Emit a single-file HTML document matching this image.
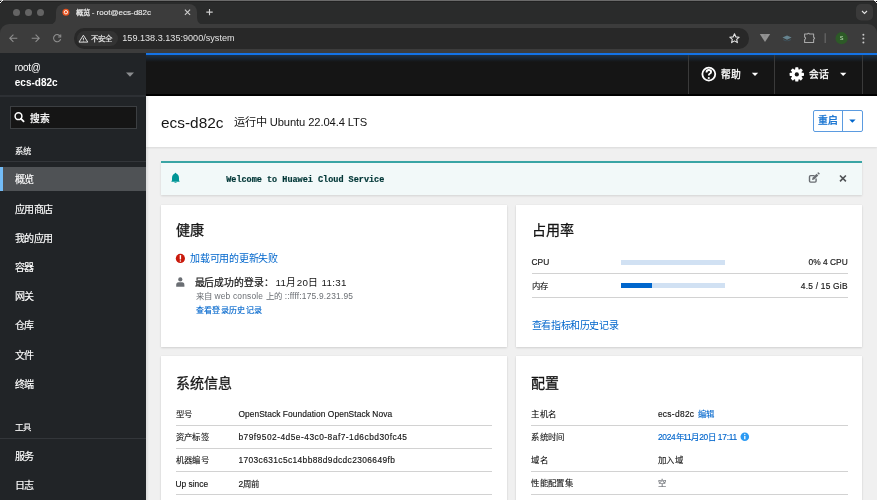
<!DOCTYPE html>
<html lang="zh-CN"><head><meta charset="utf-8">
<style>
*{box-sizing:border-box;margin:0;padding:0}
html,body{width:877px;height:500px;overflow:hidden;background:#f0f0f0;font-family:"Liberation Sans",sans-serif}
.a{position:absolute}
.t{position:absolute;white-space:nowrap;line-height:1}
svg{position:absolute;overflow:visible}
/* browser chrome */
#tabstrip{left:0;top:0;width:877px;height:40px;background:#2a2b2b;border-top:1px solid #6a6a6a}
#toolbar{left:0;top:24px;width:877px;height:29px;background:#3c3c3c;border-radius:9px 9px 0 0}
.dot{width:7.4px;height:7.4px;border-radius:50%;background:#646464;top:8.6px}
#tab{left:56px;top:3.5px;width:141px;height:22px;background:#3c3c3c;border-radius:8px 8px 0 0}
#omni{left:74px;top:28.4px;width:675px;height:20.4px;background:#282828;border-radius:10.2px}
#chip{left:76.5px;top:31px;width:41px;height:15px;background:#333333;border-radius:7.5px}
/* cockpit */
#sidebar{left:0;top:53px;width:146px;height:447px;background:#212427}
#header{left:146px;top:53px;width:731px;height:42px;background:#151515}
#blue{left:146px;top:53px;width:731px;height:2px;background:#1473e6}
#bluegrad{left:146px;top:55px;width:731px;height:7px;background:linear-gradient(#1d3146,rgba(21,21,21,0))}
.hsep{top:55px;width:1px;height:40px;background:#3a3a3a}
#pagehdr{left:146px;top:95px;width:731px;height:51.5px;background:#fff;box-shadow:0 1px 2px rgba(0,0,0,.10)}
.card{background:#fff;box-shadow:0 1px 2px rgba(3,3,3,.12),0 0 1px rgba(3,3,3,.10)}
.nav{left:14.5px;font-size:10px;letter-spacing:-0.4px;color:#fff;-webkit-text-stroke:0.15px #fff}
.navh{left:14.5px;font-size:8.4px;letter-spacing:0.4px;color:#fff;-webkit-text-stroke:0.12px #fff}
.lbl{font-size:8.4px;color:#151515;-webkit-text-stroke:0.15px currentColor}
.cj{-webkit-text-stroke:0.1px currentColor}
.sep{height:1px;background:#d2d2d2}
.link{color:#0066cc}
.cj{letter-spacing:0.4px}
.ct{font-size:14px;letter-spacing:0.1px;color:#151515;-webkit-text-stroke:0.28px #151515}
</style></head><body><div id="root" style="position:absolute;left:0;top:0;width:877px;height:500px;will-change:transform">
<!-- tab strip -->
<div class="a" id="tabstrip"></div>
<div class="a dot" style="left:12.7px"></div>
<div class="a dot" style="left:24.7px"></div>
<div class="a dot" style="left:37.1px"></div>
<div class="a" style="left:0;top:1px;width:877px;height:1px;background:#222"></div>
<div class="a" id="tab"></div>
<svg style="left:0;top:0" width="877" height="25">
  <path d="M52 25 Q56 25 56 21 L56 21" fill="#3c3c3c"/>
  <path d="M48 25 Q56 25 56 17 L56 25 Z" fill="#3c3c3c"/>
  <path d="M205 25 Q197 25 197 17 L197 25 Z" fill="#3c3c3c"/>
  <circle cx="65.9" cy="12.2" r="3.5" fill="#e95420"/>
  <circle cx="65.9" cy="12.2" r="1.7" fill="none" stroke="#fff" stroke-width="0.9"/>
  <path d="M184.9 9.6 L190.1 14.8 M190.1 9.6 L184.9 14.8" stroke="#d0d0d0" stroke-width="1.1"/>
  <path d="M209.5 8.9 V15.3 M206.3 12.1 H212.7" stroke="#d0d0d0" stroke-width="1.1"/>
  <rect x="856" y="4" width="17" height="16.5" rx="5" fill="#3a3a3a"/>
  <path d="M862 11 L864.5 13.5 L867 11" fill="none" stroke="#e3e3e3" stroke-width="1.1"/>
</svg>
<div class="t" style="left:75.5px;top:9.4px;font-size:8px;color:#ebebeb;-webkit-text-stroke:0.12px #ebebeb"><span style="font-size:7.4px;-webkit-text-stroke:0.25px #ebebeb">概览</span> - root@ecs-d82c</div>
<div class="a" style="left:0;top:0;width:3px;height:1px;background:#fff"></div>
<div class="a" style="left:0;top:0;width:2px;height:1px;background:#aaa"></div>
<div class="a" style="left:0;top:1px;width:1px;height:1px;background:#000"></div>
<div class="a" style="left:1px;top:1px;width:1px;height:1px;background:#ccc"></div>
<div class="a" style="left:0;top:2px;width:1px;height:1px;background:#fff"></div>
<div class="a" style="left:874px;top:0;width:3px;height:1px;background:#fff"></div>
<div class="a" style="left:876px;top:1px;width:1px;height:1px;background:#000"></div>
<div class="a" style="left:875px;top:1px;width:1px;height:1px;background:#ccc"></div>
<div class="a" style="left:876px;top:2px;width:1px;height:1px;background:#fff"></div>
<!-- toolbar -->
<div class="a" id="toolbar"></div>
<div class="a" id="omni"></div>
<div class="a" id="chip"></div>
<svg style="left:0;top:24px" width="877" height="29">
  <g fill="none" stroke="#8d8d8d" stroke-width="1.1">
    <path d="M10 14.2 H17.3 M13.4 10.6 L9.8 14.2 L13.4 17.8"/>
    <path d="M31.7 14.2 H39 M35.6 10.6 L39.2 14.2 L35.6 17.8"/>
    <path d="M60.3 12.4 A3.6 3.6 0 1 0 60.6 15.2"/>
    <path d="M60.7 10.4 V13 H58.1" />
  </g>
  <g fill="none" stroke="#e0e0e0" stroke-width="1">
    <path d="M83.4 11.2 L87.8 18.1 H79 Z"/>
    <path d="M83.4 13.8 V15.9"/>
  </g>
  <circle cx="83.4" cy="16.9" r="0.5" fill="#e0e0e0"/>
  <path d="M734.5 9.8 L735.9 12.9 L739.2 13.2 L736.7 15.4 L737.4 18.6 L734.5 16.9 L731.6 18.6 L732.3 15.4 L729.8 13.2 L733.1 12.9 Z" fill="none" stroke="#e3e3e3" stroke-width="1.1" stroke-linejoin="round"/>
  <path d="M759.8 10 H770.2 L765 17.9 Z" fill="#939393"/>
  <path d="M763.2 10.3 L765 13.6 L766.8 10.3 Z" fill="#8a8a8a"/>
  <path d="M783 16 Q787 18.4 791 16 V15 L787 16.8 L783 15 Z" fill="#3e525c"/><path d="M782.5 13.6 L787 11.6 L791.6 13.6 L787 15.8 Z" fill="#65838f"/>
  
  <path d="M804.6 10 H807.4 Q808.5 8.4 809.6 10 H813.6 V13.2 Q815.6 14.2 813.6 15.2 V18.5 H804.6 V15.6 Q806.6 14.3 804.6 13 Z" fill="none" stroke="#a8a8a8" stroke-width="1.1" stroke-linejoin="round"/>
  <path d="M825.2 9.3 V18.9" stroke="#686868" stroke-width="1.2"/>
  <circle cx="841.6" cy="14.2" r="6.1" fill="#2d5a27"/>
  <text x="841.6" y="16.2" font-size="5.5" fill="#c5e3bd" text-anchor="middle" font-family="Liberation Sans">S</text>
  <circle cx="863.4" cy="10.7" r="1" fill="#c7c7c7"/>
  <circle cx="863.4" cy="14.6" r="1" fill="#c7c7c7"/>
  <circle cx="863.4" cy="18.5" r="1" fill="#c7c7c7"/>
</svg>
<div class="t" style="left:90.8px;top:34.8px;font-size:7.4px;color:#e8e8e8;-webkit-text-stroke:0.2px #e8e8e8">不安全</div>
<div class="t" style="left:122.3px;top:34.2px;font-size:9.1px;color:#e3e3e3">159.138.3.135:9000/system</div>

<!-- cockpit -->
<div class="a" id="sidebar"></div>
<div class="a" style="left:0;top:95px;width:146px;height:1.6px;background:#2d3034"></div>
<div class="t" style="left:14.8px;top:62.5px;font-size:10px;color:#fff;letter-spacing:-0.3px">root@</div>
<div class="t" style="left:14.8px;top:77.8px;font-size:10px;font-weight:bold;color:#fff">ecs-d82c</div>
<svg style="left:0;top:53px" width="146" height="80">
  <path d="M126 19.4 H134 L130 23.8 Z" fill="#8b8d8f"/>
</svg>
<div class="a" style="left:10px;top:106px;width:127px;height:22.5px;background:#151515;border:1px solid #3c3f42"></div>
<svg style="left:0;top:100px" width="40" height="30">
  <circle cx="18.5" cy="16.2" r="3.4" fill="none" stroke="#fff" stroke-width="1.5"/>
  <path d="M20.9 18.6 L23.6 21.3" stroke="#fff" stroke-width="1.8" stroke-linecap="round"/>
</svg>
<div class="t" style="left:29.7px;top:113.5px;font-size:9.8px;color:#fff;-webkit-text-stroke:0.25px #fff">搜索</div>
<div class="t navh" style="top:147px">系统</div>
<div class="a" style="left:0;top:161px;width:146px;height:1px;background:#33363a"></div>
<div class="a" style="left:0;top:167px;width:146px;height:24px;background:#4f5255"></div>
<div class="a" style="left:0;top:167px;width:2.5px;height:24px;background:#73bcf7"></div>
<div class="t nav" style="top:175px">概览</div>
<div class="t nav" style="top:204.5px">应用商店</div>
<div class="t nav" style="top:233.5px">我的应用</div>
<div class="t nav" style="top:262.5px">容器</div>
<div class="t nav" style="top:292.0px">网关</div>
<div class="t nav" style="top:321.3px">仓库</div>
<div class="t nav" style="top:350.7px">文件</div>
<div class="t nav" style="top:379.9px">终端</div>
<div class="t navh" style="top:423px">工具</div>
<div class="a" style="left:0;top:437.5px;width:146px;height:1px;background:#33363a"></div>
<div class="t nav" style="top:452.0px">服务</div>
<div class="t nav" style="top:481.2px">日志</div>

<div class="a" id="header"></div>
<div class="a" id="blue"></div>
<div class="a" id="bluegrad"></div>
<div class="a hsep" style="left:687.5px"></div>
<div class="a hsep" style="left:774px"></div>
<div class="a hsep" style="left:861.5px"></div>
<svg style="left:680px;top:53px" width="197" height="42">
  <circle cx="28.8" cy="21.1" r="6.45" fill="none" stroke="#fff" stroke-width="1.8"/>
  <path d="M26.5 19.4 Q26.5 17 28.8 17 Q31.1 17 31.1 18.9 Q31.1 20.1 29.7 20.8 Q28.8 21.3 28.8 22.6" fill="none" stroke="#fff" stroke-width="1.8"/>
  <circle cx="28.8" cy="25" r="1.1" fill="#fff"/>
  <path d="M71.8 19.8 H78.2 L75 23 Z" fill="#fff"/>
  <g transform="translate(116.8 21.4)" fill="#fff"><rect x="-1.6" y="-7.2" width="3.2" height="3.4" rx="0.7" transform="rotate(0)"/><rect x="-1.6" y="-7.2" width="3.2" height="3.4" rx="0.7" transform="rotate(45)"/><rect x="-1.6" y="-7.2" width="3.2" height="3.4" rx="0.7" transform="rotate(90)"/><rect x="-1.6" y="-7.2" width="3.2" height="3.4" rx="0.7" transform="rotate(135)"/><rect x="-1.6" y="-7.2" width="3.2" height="3.4" rx="0.7" transform="rotate(180)"/><rect x="-1.6" y="-7.2" width="3.2" height="3.4" rx="0.7" transform="rotate(225)"/><rect x="-1.6" y="-7.2" width="3.2" height="3.4" rx="0.7" transform="rotate(270)"/><rect x="-1.6" y="-7.2" width="3.2" height="3.4" rx="0.7" transform="rotate(315)"/><circle r="5.3"/><circle r="2.1" fill="#151515"/></g>
  <path d="M160 19.8 H166.4 L163.2 23 Z" fill="#fff"/>
</svg>
<div class="t" style="left:721.3px;top:70.2px;font-size:9.8px;color:#fff;-webkit-text-stroke:0.3px #fff">帮助</div>
<div class="t" style="left:809px;top:70.2px;font-size:9.8px;color:#fff;-webkit-text-stroke:0.3px #fff">会话</div>

<div class="a" id="pagehdr"></div>
<div class="a" style="left:146px;top:94px;width:731px;height:1.6px;background:#000"></div>
<div class="t" style="left:161px;top:114.6px;font-size:15.4px;color:#151515">ecs-d82c</div>
<div class="t" style="left:233.6px;top:117.3px;font-size:11.2px;color:#151515">运行中 <span style="letter-spacing:-0.1px">Ubuntu 22.04.4 LTS</span></div>
<div class="a" style="left:813px;top:110px;width:49.5px;height:22px;border:1px solid #5b9be0;border-radius:2px"></div>
<div class="a" style="left:842.3px;top:110px;width:1px;height:22px;background:#5b9be0"></div>
<div class="t" style="left:818px;top:116.2px;font-size:9.8px;color:#0066cc;-webkit-text-stroke:0.25px #0066cc">重启</div>
<svg style="left:840px;top:110px" width="22" height="22">
  <path d="M9.2 9.6 H15.6 L12.4 12.8 Z" fill="#0066cc"/>
</svg>

<div class="a" style="left:146px;top:95.6px;width:2.5px;height:405px;background:linear-gradient(90deg,rgba(0,0,0,.09),rgba(0,0,0,0))"></div>
<!-- alert -->
<div class="a" style="left:161px;top:161px;width:701px;height:34px;background:#f2f9f9;border-top:2px solid #3aa5a5;box-shadow:0 1px 2px rgba(3,3,3,.12)"></div>
<svg style="left:161px;top:161px" width="701" height="34">
  <path d="M14.5 11.8 Q15.2 11.8 15.2 12.6 Q18 13.6 18 17.2 V19.2 L18.7 20.8 H10.3 L11 19.2 V17.2 Q11 13.6 13.8 12.6 Q13.8 11.8 14.5 11.8 Z" fill="#009596"/>
  <path d="M13.2 21.2 H15.8 Q15.8 22 14.5 22 Q13.2 22 13.2 21.2 Z" fill="#009596"/>
  <path d="M653.6 14.6 H649.6 Q648.5 14.6 648.5 15.7 V20 Q648.5 21.1 649.6 21.1 H654 Q655.1 21.1 655.1 20 V17.6" fill="none" stroke="#6a6e73" stroke-width="1.4"/>
  <path d="M651 19 L651.5 16.8 L655.6 12.7 L657.3 14.4 L653.2 18.5 Z" fill="#6a6e73"/>
  <path d="M656.2 12.1 L656.9 11.4 Q657.3 11 657.7 11.4 L658.6 12.3 Q659 12.7 658.6 13.1 L657.9 13.8 Z" fill="#6a6e73"/>
  <path d="M679 14.5 L684.9 20.4 M684.9 14.5 L679 20.4" stroke="#4f5255" stroke-width="1.6"/>
</svg>
<div class="t" style="left:226.2px;top:175.5px;font-family:'Liberation Mono',monospace;font-weight:bold;font-size:8.5px;color:#003737;-webkit-text-stroke:0.2px #003737">Welcome to Huawei Cloud Service</div>

<!-- cards -->
<div class="a card" style="left:161px;top:204.5px;width:346px;height:142px"></div>
<div class="a card" style="left:515.5px;top:204.5px;width:346.5px;height:142px"></div>
<div class="a card" style="left:161px;top:355.5px;width:346px;height:150px"></div>
<div class="a card" style="left:515.5px;top:355.5px;width:346.5px;height:150px"></div>

<div class="t ct" style="left:176.3px;top:223.2px">健康</div>
<svg style="left:161px;top:240px" width="40" height="60">
  <circle cx="19.4" cy="18.4" r="4.6" fill="#c9190b"/>
  <path d="M19.4 15.6 V18.9" stroke="#fff" stroke-width="1.4" stroke-linecap="round"/>
  <circle cx="19.4" cy="20.9" r="0.75" fill="#fff"/>
  <circle cx="19.3" cy="39.4" r="2.1" fill="#6a6e73"/>
  <path d="M15.2 46.7 V45 Q15.2 42.3 17.6 42.3 H21 Q23.4 42.3 23.4 45 V46.7 Z" fill="#6a6e73"/>
</svg>
<div class="t link" style="left:190.2px;top:254px;font-size:10px;letter-spacing:-0.27px">加载可用的更新失败</div>
<div class="t" style="left:194.6px;top:277.5px;font-size:9.8px;color:#151515;letter-spacing:0.3px"><span style="letter-spacing:-0.1px;-webkit-text-stroke:0.2px #151515;margin-right:1.8px">最后成功的登录：</span>11月20日 11:31</div>
<div class="t" style="left:195.5px;top:292px;font-size:8.4px;color:#6a6e73;letter-spacing:0.2px">来自 web console 上的 ::ffff:175.9.231.95</div>
<div class="t link" style="left:195.5px;top:307px;font-size:8px;letter-spacing:0.4px;-webkit-text-stroke:0.15px #0066cc">查看登录历史记录</div>

<div class="t ct" style="left:531.9px;top:223.2px">占用率</div>
<div class="t lbl" style="left:531.5px;top:258px">CPU</div>
<div class="a" style="left:621px;top:260px;width:104px;height:4.5px;background:#d1e1f3"></div>
<div class="t lbl" style="right:29.3px;top:258px">0% 4 CPU</div>
<div class="a sep" style="left:531.9px;top:273px;width:316px"></div>
<div class="t lbl cj" style="left:531.5px;top:281.8px">内存</div>
<div class="a" style="left:621px;top:283px;width:104px;height:4.5px;background:#d1e1f3"></div>
<div class="a" style="left:621px;top:283px;width:30.5px;height:4.5px;background:#0066cc"></div>
<div class="t lbl" style="right:29.3px;top:282px;letter-spacing:0.22px">4.5 / 15 GiB</div>
<div class="a sep" style="left:531.9px;top:296.5px;width:316px"></div>
<div class="t link" style="left:531.9px;top:320.6px;font-size:10px;letter-spacing:-0.4px">查看指标和历史记录</div>

<div class="t ct" style="left:175.5px;top:375.8px">系统信息</div>
<div class="t lbl cj" style="left:175.5px;top:409.8px">型号</div>
<div class="t lbl" style="left:238.4px;top:409.8px;letter-spacing:0.07px">OpenStack Foundation OpenStack Nova</div>
<div class="a sep" style="left:175.5px;top:425px;width:316px"></div>
<div class="t lbl cj" style="left:175.5px;top:433.1px">资产标签</div>
<div class="t lbl" style="left:238.4px;top:433.1px;letter-spacing:0.48px">b79f9502-4d5e-43c0-8af7-1d6cbd30fc45</div>
<div class="a sep" style="left:175.5px;top:448px;width:316px"></div>
<div class="t lbl cj" style="left:175.5px;top:456.1px">机器编号</div>
<div class="t lbl" style="left:238.4px;top:456.1px;letter-spacing:0.39px">1703c631c5c14bb88d9dcdc2306649fb</div>
<div class="a sep" style="left:175.5px;top:471px;width:316px"></div>
<div class="t lbl" style="left:175.5px;top:479.8px">Up since</div>
<div class="t lbl" style="left:238.4px;top:479.8px">2周前</div>
<div class="a sep" style="left:175.5px;top:494px;width:316px"></div>

<div class="t ct" style="left:531.3px;top:375.8px">配置</div>
<div class="t lbl cj" style="left:531.3px;top:409.8px">主机名</div>
<div class="t lbl" style="left:657.9px;top:409.8px"><span style="letter-spacing:0.31px">ecs-d82c</span> <span class="link cj" style="margin-left:1.3px">编辑</span></div>
<div class="a sep" style="left:531.3px;top:425px;width:316.5px"></div>
<div class="t lbl cj" style="left:531.3px;top:433px">系统时间</div>
<div class="t lbl link" style="left:657.9px;top:433px;letter-spacing:-0.25px">2024年11月20日 17:11</div>
<svg style="left:735px;top:425px" width="20" height="20">
  <circle cx="9.8" cy="11.8" r="4.3" fill="#2b9af3"/>
  <path d="M9.8 11 V14.2" stroke="#fff" stroke-width="1.3"/>
  <circle cx="9.8" cy="9.5" r="0.7" fill="#fff"/>
</svg>
<div class="t lbl cj" style="left:531.3px;top:456px">域名</div>
<div class="t lbl cj" style="left:657.9px;top:456px">加入域</div>
<div class="a sep" style="left:531.3px;top:471px;width:316.5px"></div>
<div class="t lbl cj" style="left:531.3px;top:479.1px">性能配置集</div>
<div class="t lbl" style="left:657.9px;top:479.1px;color:#6a6e73">空</div>
<div class="a sep" style="left:531.3px;top:494px;width:316.5px"></div>
</div></body></html>
